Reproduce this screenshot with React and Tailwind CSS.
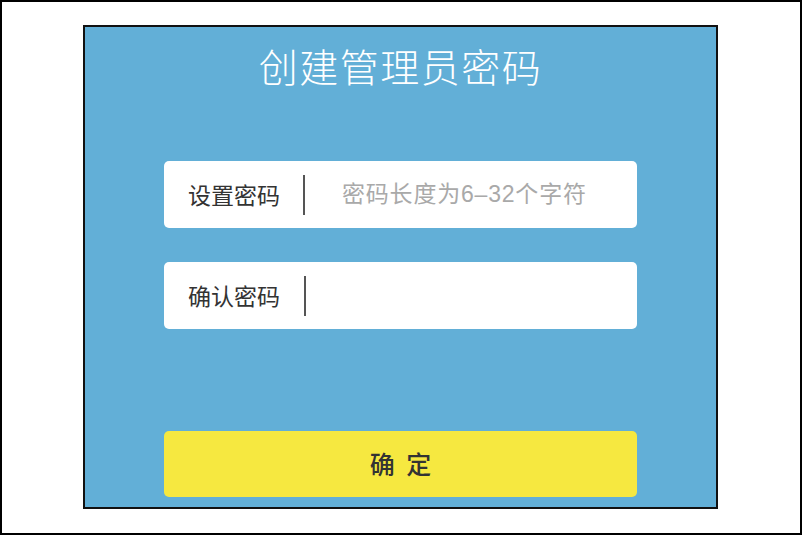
export default function App() {
  return (
    <div className="w-[802px] h-[535px] border-2 border-black bg-white font-['Noto_Sans_CJK_SC',sans-serif]">
      <div className="ml-[81px] mt-[23px] w-[635px] h-[484px] border-2 border-[#111] bg-[#62afd7] px-[79px] flex flex-col">
        <h1 className="mt-[14px] h-[48px] leading-[48px] text-center text-white text-[39px] font-light tracking-[1.5px]">
          创建管理员密码
        </h1>

        <div className="mt-[72px] h-[67px] rounded-[5px] bg-white flex items-center pl-[24px]">
          <span className="text-[23px] text-[#333] w-[93px]">设置密码</span>
          <div className="ml-[22px] w-[2px] h-[40px] bg-[#555]" />
          <span className="ml-[37px] text-[23px] text-[#a9a9a9] tracking-[0.8px] font-['Liberation_Sans','Noto_Sans_CJK_SC',sans-serif]">
            密码长度为6–32个字符
          </span>
        </div>

        <div className="mt-[34px] h-[67px] rounded-[5px] bg-white flex items-center pl-[24px]">
          <span className="text-[23px] text-[#333] w-[93px]">确认密码</span>
          <div className="ml-[23px] w-[2px] h-[40px] bg-[#555]" />
        </div>

        <button className="mt-[102px] h-[66px] rounded-[5px] bg-[#f6e840] text-[25px] text-[#333] font-medium tracking-[3px] pl-[3px]">
          确 定
        </button>
      </div>
    </div>
  )
}
